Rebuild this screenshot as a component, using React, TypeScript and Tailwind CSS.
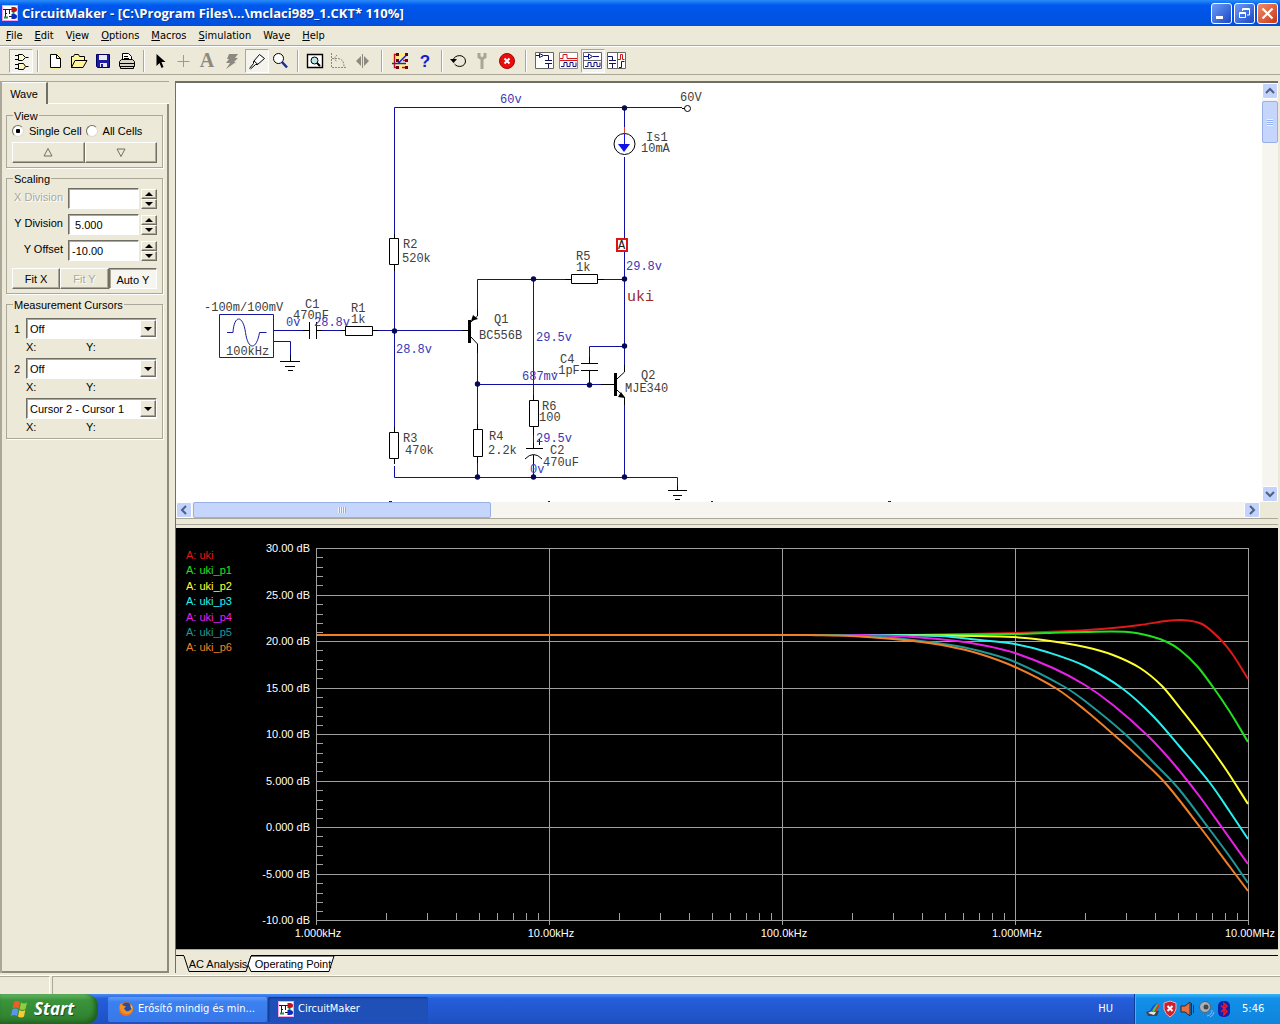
import React, { ReactNode } from "react";

type Pt = [number, number];

const UI = "font-['Liberation_Sans',Arial,sans-serif]";
const TAHOMA = "font-['DejaVu_Sans_Condensed','Open_Sans',sans-serif]";

/* ---------- shared pieces ---------- */

function AppLogo() {
  return (
    <svg viewBox="0 0 16 16" className="size-4 shrink-0" aria-hidden="true">
      <rect width="16" height="16" fill="#ff9ce8" />
      <rect x="1" y="1" width="14" height="14" fill="#fff" />
      <path d="M1 4.500h9M3.500 4v9M7.500 5v4M3 8.500h2M7 11.500h3" stroke="#1c1c1c" fill="none" />
      <path d="M2 12.500h4M11.500 7v2" stroke="#149c3c" strokeWidth="2" />
      <path d="M9.500 2h2.500q3 0 3 2.500T12 7H9.500z" fill="#c80f1e" />
      <path d="M9.500 9h2.500q3 0 3 2.500T12 14H9.500z" fill="#0b2bbd" />
    </svg>
  );
}

function Sep() {
  return <span className="mx-1 h-[22px] w-0.5 border-l border-[#aca899] border-r border-r-white" />;
}

function WideSep() {
  return <span className="mx-1.5 h-[22px] w-0.5 border-l border-[#aca899] border-r border-r-white" />;
}

function Tool({ label, pressed, children }: { label: string; pressed?: boolean; children: ReactNode }) {
  return (
    <button
      type="button"
      aria-label={label}
      aria-pressed={pressed}
      className={
        pressed
          ? "size-6 border border-t-[#aca899] border-l-[#aca899] border-r-white border-b-white bg-[#f5f4ec]"
          : "size-6 border border-transparent"
      }
    >
      <svg viewBox="0 0 22 22" className="size-[22px]" fill="none" stroke="#000" strokeWidth="1">
        {children}
      </svg>
    </button>
  );
}

/* ---------- window chrome ---------- */

function TitleBar() {
  const box = "flex size-[21px] items-center justify-center rounded-[3px] border border-white";
  return (
    <header className="flex h-[26px] shrink-0 items-center bg-linear-to-b from-[#2a8cf8] via-[#0058ee] via-20% to-[#0050dc] pr-0.5 pl-0.5">
      <AppLogo />
      <h1 className="ml-1 flex-1 truncate font-['Open_Sans','Noto_Sans',sans-serif] text-[13px] leading-4 font-bold text-white [text-shadow:1px_1px_0_#0a2f8c]">
        CircuitMaker - [C:\Program Files\...\mclaci989_1.CKT* 110%]
      </h1>
      <div className="flex gap-0.5">
        <button type="button" aria-label="Minimize" className={`${box} bg-linear-to-br from-[#6f9bf5] to-[#1c45c8]`}>
          <svg viewBox="0 0 19 19" className="size-[19px]"><path d="M4 12h7v3H4z" fill="#fff" /></svg>
        </button>
        <button type="button" aria-label="Restore" className={`${box} bg-linear-to-br from-[#6f9bf5] to-[#1c45c8]`}>
          <svg viewBox="0 0 19 19" className="size-[19px]" fill="none" stroke="#fff">
            <path d="M7.500 7V4.500h7V11H12M7 5.500h8" /><path d="M4.500 8.500h6v5h-6zM4 9.500h7" />
          </svg>
        </button>
        <button type="button" aria-label="Close" className={`${box} bg-linear-to-br from-[#f08a68] to-[#c83410]`}>
          <svg viewBox="0 0 19 19" className="size-[19px]"><path d="M4.500 4.500l10 10M14.500 4.500l-10 10" stroke="#fff" strokeWidth="2.200" /></svg>
        </button>
      </div>
    </header>
  );
}

const menus: [string, string, string][] = [
  ["", "F", "ile"], ["", "E", "dit"], ["V", "i", "ew"], ["", "O", "ptions"],
  ["", "M", "acros"], ["", "S", "imulation"], ["Wa", "v", "e"], ["", "H", "elp"],
];

function MenuBar() {
  return (
    <nav className={`flex h-5 shrink-0 items-center border-b border-[#aca899] ${TAHOMA} text-[11px] leading-4 text-black`}>
      {menus.map(([a, u, b]) => (
        <button type="button" key={a + u + b} className="px-1.5">
          {a}<u>{u}</u>{b}
        </button>
      ))}
    </nav>
  );
}

function Toolbar() {
  return (
    <div role="toolbar" aria-label="Main" className="flex h-[29px] shrink-0 items-center border-t border-b border-t-white border-b-[#aca899] pl-[9px]">
      <Tool label="Digital mode" pressed>
        <path fill="#fffbc0" d="M8.500 4.500h4l3 3-3 3h-4zM8.500 13.500h5l2 3-2 3h-5z" />
        <path d="M5 5.500h3M5 9.500h3M16 7.500h2.500M5 14.500h3M5 18.500h3M16 16.500h2.500" />
      </Tool>
      <Sep />
      <Tool label="New">
        <path fill="#ffffb0" stroke="#f5ee70" d="M6 4h10v14H6z" />
        <path fill="#fff" d="M6.500 4.500h6l4 4v9h-10zM12.500 4.500v4h4" />
      </Tool>
      <Tool label="Open">
        <path fill="#fff59a" d="M3.500 17.500v-11h2l1-2h4l1 2h5v4M3.500 17.500l3.500-7h12l-4 7z" />
      </Tool>
      <Tool label="Save">
        <path fill="#1c1c9c" stroke="#000060" d="M4.500 4.500h13v13h-12l-1-1z" />
        <path fill="#e8e8f4" stroke="none" d="M7 5h8v5H7zM8 13h7v4H8z" /><path fill="#1c1c9c" stroke="none" d="M9 14h2v3H9z" />
      </Tool>
      <Tool label="Print">
        <path fill="#fff" d="M6.500 9.500v-6h6l3 3v4M8 6.500h4M8 8.500h5" />
        <path fill="#d8d4c4" d="M5.500 9.500h11l2 2v5h-15v-5zM3.500 13.500h15M4.500 16.500v2h13v-2" />
      </Tool>
      <Sep />
      <Tool label="Select"><path fill="#000" d="M6.500 4v12l3-3 2 5 2-1-2-5h4z" stroke="none" /></Tool>
      <Tool label="Wire"><path stroke="#9c9a8c" d="M9.500 5v12M3.500 11.500h12" /></Tool>
      <Tool label="Text">
        <text x="9" y="17" textAnchor="middle" fill="#8c8a80" stroke="none" fontSize="20" fontFamily="Liberation Serif, serif" fontWeight="bold">A</text>
      </Tool>
      <Tool label="Delete"><path fill="#8c8a80" stroke="none" d="M7 4h9l-3 4h3l-4 4h2L4 19l4-6H4l3-4H5z" /></Tool>
      <Tool label="Probe" pressed>
        <path fill="#fff" d="M3.500 18.500l4-5 0-2 6-7 5 4-7 6-2 0-5 4.500" /><path d="M8 11l4 3.500" />
      </Tool>
      <Tool label="Zoom">
        <circle cx="8.500" cy="8.500" r="5" fill="#fff" /><path d="M12 12l5 5.500" stroke="#1c2ca0" strokeWidth="2.600" />
      </Tool>
      <Sep />
      <Tool label="Fit to window">
        <path fill="#fff" d="M3.500 4.500h15v13h-15z" strokeWidth="1.400" />
        <circle cx="10.500" cy="10.500" r="3.500" fill="#bfe6e6" /><path d="M13 13l3 3" strokeWidth="2" />
      </Tool>
      <Tool label="Rotate">
        <path stroke="#8c8a80" d="M3.500 3v14.500H19M4 8.500h5c5 0 7 3 7 8M9 5l-3 3.500 3 3.500" strokeDasharray="2 1" />
      </Tool>
      <Tool label="Mirror">
        <path fill="#8c8a80" stroke="none" d="M9 6v10l-5-5zM12 6v10l5-5z" /><path stroke="#8c8a80" d="M10.500 4v14" />
      </Tool>
      <WideSep />
      <Tool label="Run analyses">
        <path stroke="#fff080" strokeWidth="5" d="M5 6h11M5 16h13M5 6v10" />
        <path stroke="#c40c1c" strokeWidth="1.400" d="M9 4.500H4.500v13H9M13 10.500h4M12 17.500h5" />
        <path stroke="#1828d0" strokeWidth="1.600" d="M2 13.500h6l9-9M8 13.500h8" />
        <path fill="#700010" stroke="none" d="M6 3h3v3H6zM15 3h3v3h-3zM6 9h3v3H6zM15 9h3v3h-3zM6 16h3v3H6zM15 16h3v3h-3z" />
      </Tool>
      <Tool label="Help">
        <text x="11" y="17" textAnchor="middle" fill="#1818d8" stroke="none" fontSize="17" fontWeight="bold" fontFamily="Liberation Sans, sans-serif">?</text>
      </Tool>
      <Sep />
      <Tool label="Reset">
        <path d="M5 10c2-6 12-6 12.500 1 0 6-8 7-11 3" /><path fill="#000" d="M2 9h7l-3.500 4z" stroke="none" />
      </Tool>
      <Tool label="Step"><path stroke="#a8a698" strokeWidth="3" d="M7 3v4l3 2 3-2V3M10 9v10" /></Tool>
      <Tool label="Stop">
        <circle cx="11" cy="11" r="7.500" fill="#e80c0c" stroke="#a80404" /><path stroke="#fff" strokeWidth="2" d="M8.500 8.500l5 5M13.500 8.500l-5 5" />
      </Tool>
      <WideSep />
      <Tool label="Schematic view">
        <path fill="#fff" stroke="#666" d="M1.500 2.500h18v16h-18z" />
        <path stroke="#101060" d="M2 5.500h3M5.500 3.500v4l4-2zM10 5.500h4.500v5M11 10.500h7M11 13.500h7M14.500 14v4" />
      </Tool>
      <Tool label="Wave view">
        <path fill="#fff" stroke="#888" d="M1.500 2.500h18v16h-18z" /><path stroke="#d01818" d="M2 8.500h3v-4h4v4h10M2 10.500h17" /><path stroke="#101080" d="M3 16.500h3v-4h3v4h3v-4h3v4h3v-4" />
      </Tool>
      <Tool label="Split horizontally" pressed>
        <path fill="#fff" stroke="#666" d="M1.500 2.500h18v16h-18zM2 10.500h17" /><path stroke="#101080" d="M2 6.500h4M6.500 4v5l4-2.500zM11 6.500h6M3 16.500h3v-4h3v4h3v-4h3v4h3v-4" />
      </Tool>
      <Tool label="Split vertically">
        <path fill="#fff" stroke="#666" d="M1.500 2.500h18v16h-18zM11.500 3v15" /><path stroke="#101060" d="M2 6.500h4.500v4M3 10.500h7M3 13.500h7M6.500 14v4M13 17.500h2.500v-6h3" /><path stroke="#d01818" d="M12 9.500h2.500v-5h2v5h2" />
      </Tool>
    </div>
  );
}

/* ---------- side panel ---------- */

const raised =
  "border border-t-white border-l-white border-r-[#716f64] border-b-[#716f64] shadow-[inset_-1px_-1px_0_#aca899]";
const sunken =
  "border border-t-[#716f64] border-l-[#716f64] border-r-white border-b-white shadow-[inset_1px_1px_0_#aca899]";

function Group({ title, children }: { title: string; children: ReactNode }) {
  return (
    <fieldset className="min-w-0 border border-[#aca899] px-[5px] pb-1 shadow-[1px_1px_0_#fff]">
      <legend className="ml-px h-3 px-px leading-[14px]">{title}</legend>
      {children}
    </fieldset>
  );
}

function Radio({ label, on }: { label: string; on?: boolean }) {
  return (
    <label className="flex items-center gap-[5px]">
      <input
        type="radio"
        name="cells"
        defaultChecked={on}
        className="size-3 appearance-none rounded-full border border-t-[#716f64] border-l-[#716f64] border-r-[#e0dccc] border-b-[#e0dccc] bg-white checked:bg-[radial-gradient(circle,#000_2px,#fff_2.500px)]"
      />
      {label}
    </label>
  );
}

function Spin() {
  return (
    <span className="ml-0.5 flex w-4 flex-col">
      {["Increase", "Decrease"].map((n, i) => (
        <button type="button" key={n} aria-label={n} className={`flex h-[10px] items-center justify-center bg-[#ece9d8] ${raised}`}>
          <svg viewBox="0 0 8 4" className="h-1 w-2"><path d={i ? "M0 0h8L4 4z" : "M0 4h8L4 0z"} /></svg>
        </button>
      ))}
    </span>
  );
}

function Field({ id, label, value, off }: { id: string; label: string; value: string; off?: boolean }) {
  return (
    <div className="flex h-[21px] items-center">
      <label htmlFor={id} className={off ? "mb-1 flex-1 pr-[5px] text-right text-[#aca899] [text-shadow:1px_1px_0_#fff]" : "mb-1 flex-1 pr-[5px] text-right"}>
        {label}
      </label>
      <input id={id} defaultValue={value} disabled={off} className={`h-[21px] w-[71px] bg-white pl-[3px] ${sunken}`} />
      <Spin />
    </div>
  );
}

function Cursor({ id, mark, value }: { id: string; mark: string; value: string }) {
  return (
    <div>
      <div className="flex items-center">
        <label htmlFor={id} className="w-[14px] pl-0.5">{mark}</label>
        <div className="relative flex-1">
          <select
            id={id}
            aria-label={mark ? `Cursor ${mark}` : "Difference"}
            className={`block h-[21px] w-full appearance-none bg-white pl-[3px] text-black ${sunken}`}
          >
            <option>{value}</option>
          </select>
          <span className={`pointer-events-none absolute top-0.5 right-px flex h-[17px] w-4 items-center justify-center bg-[#ece9d8] ${raised}`}>
            <svg viewBox="0 0 8 4" className="h-1 w-2"><path d="M0 0h8L4 4z" /></svg>
          </span>
        </div>
      </div>
      <div className="flex h-[15px] items-center pl-[14px]">
        <span className="w-[60px]">X:</span>
        <span>Y:</span>
      </div>
    </div>
  );
}

function SidePanel() {
  return (
    <aside className={`flex w-[169px] shrink-0 flex-col border-l-2 border-t border-[#aca899] ${UI} text-[11px] leading-[14px] text-black`}>
      <div role="tablist" className="flex">
        <button type="button" role="tab" aria-selected="true" className="h-[22px] w-[46px] border-t border-r-2 border-t-white border-r-[#716f64]">
          Wave
        </button>
        <span className="flex-1 border-b border-white" />
      </div>
      <div className="flex flex-1 flex-col gap-1 border-r-2 border-b-2 border-[#8d8b7e] pt-[5px] pr-1 pl-1">
        <Group title="View">
          <div className="flex h-[21px] items-center gap-1 pb-px">
            <Radio label="Single Cell" on />
            <Radio label="All Cells" />
          </div>
          <div className="flex">
            <button type="button" aria-label="Previous cell" className={`flex h-[21px] flex-1 items-center justify-center ${raised}`}>
              <svg viewBox="0 0 10 9" className="h-[9px] w-[10px]" fill="none" stroke="#716f64"><path d="M5 .5l4 7.500H1z" /></svg>
            </button>
            <button type="button" aria-label="Next cell" className={`flex h-[21px] flex-1 items-center justify-center ${raised}`}>
              <svg viewBox="0 0 10 9" className="h-[9px] w-[10px]" fill="none" stroke="#716f64"><path d="M5 8.500L1 1h8z" /></svg>
            </button>
          </div>
        </Group>
        <Group title="Scaling">
          <div className="flex flex-col gap-[5px] pt-1">
            <Field id="xd" label="X Division" value="" off />
            <Field id="yd" label="Y Division" value=" 5.000" />
            <Field id="yo" label="Y Offset" value="-10.00" />
          </div>
          <div className="mt-[7px] flex">
            <button type="button" className={`h-[21px] flex-1 ${raised}`}>Fit X</button>
            <button type="button" disabled className={`h-[21px] flex-1 text-[#aca899] [text-shadow:1px_1px_0_#fff] ${raised}`}>Fit Y</button>
            <button type="button" aria-pressed="true" className={`h-[21px] flex-1 bg-[#f6f5ef] pt-0.5 ${sunken}`}>Auto Y</button>
          </div>
        </Group>
        <Group title="Measurement Cursors">
          <div className="flex flex-col gap-1 pt-2">
            <Cursor id="c1" mark="1" value="Off" />
            <Cursor id="c2" mark="2" value="Off" />
            <Cursor id="c3" mark="" value="Cursor 2 - Cursor 1" />
          </div>
        </Group>
      </div>
    </aside>
  );
}

/* ---------- schematic ---------- */

const wires = [
  "M394.500 237V107.500H624.500V132", "M624.500 107.500H682", "M394.500 266V431", "M394.500 466V477.500H677.500V486",
  "M274 330.500H303", "M274 341.500H290.500V355", "M321 330.500H341", "M378 330.500H466",
  "M477.500 310V279.500H565", "M603 279.500H624.500", "M477.500 353V424", "M477.500 384.500H604",
  "M533.500 279.500V395", "M589.500 357V346.500H624.500", "M624.500 157V365", "M624.500 405V477", "M477.500 463V477", "M533.500 435V443M533.500 465V477",
];

const parts = [
  "M389.500 238.500h9v26h-9zM394.500 234v4M394.500 265v6", "M389.500 432.500h9v26h-9zM394.500 427v5M394.500 459v5",
  "M345.500 326.500h27v9h-27zM341 330.500h4M373 330.500h5", "M571.500 274.500h26v9h-26zM565 279.500h6M598 279.500h6",
  "M473.500 429.500h9v27h-9zM477.500 424v5M477.500 457v6", "M529.500 400.500h9v26h-9zM533.500 395v5M533.500 427v8",
  "M309.500 322v17M316.500 322v17M303 330.500h6M317 330.500h5",
  "M280 361.500h20M285 366.500h10M288 370.500h5M290.500 355v6",
  "M581 363.500h17M581 370.500h17M589.500 357v6M589.500 371v13",
  "M526 448.500h17M525 459q8.500-9 17 0M533.500 443v5M533.500 455v10M539.500 439v6M537 441.500h5",
  "M668 490.500h19M673 495.500h9M675 499.500h5M677.500 486v4",
  "M682 108.500h3M462 330.500h6M471 322l6.500-6v-6M471 337l6.500 7v9M601 384.500h13M617 379l7.500-7v-7M617 390l7.500 7v8",
];

const nodes: Pt[] = [
  [624, 108], [533, 279], [624, 279], [394, 331], [477, 384], [589, 385], [624, 346], [477, 477], [533, 477], [624, 477],
];

const names: [number, number, string][] = [
  [680, 101, "60V"], [646, 141, "Is1"], [641, 152, "10mA"], [403, 248, "R2"], [402, 262, "520k"], [204, 311, "-100m/100mV"],
  [226, 355, "100kHz"], [305, 308, "C1"], [293, 319, "470nF"], [351, 312, "R1"], [351, 323, "1k"], [576, 260, "R5"], [576, 271, "1k"],
  [494, 323, "Q1"], [479, 339, "BC556B"], [560, 363, "C4"], [551, 374, ".1pF"], [641, 379, "Q2"], [625, 392, "MJE340"],
  [542, 410, "R6"], [539, 421, "100"], [489, 440, "R4"], [488, 454, "2.2k"], [550, 454, "C2"], [543, 466, "470uF"],
  [403, 442, "R3"], [405, 454, "470k"],
];

const volts: [number, number, string][] = [
  [500, 103, "60v"], [626, 270, "29.8v"], [286, 326, "0v"], [314, 326, "28.8v"], [396, 353, "28.8v"], [536, 341, "29.5v"],
  [522, 380, "687mv"], [536, 442, "29.5v"], [530, 473, "0v"],
];

function Schematic() {
  return (
    <svg viewBox="176 83 1085 419" className="h-[419px] w-[1085px] max-w-none" fontFamily="Liberation Mono, monospace" fontSize="12" role="img" aria-label="Schematic">
      <g fill="none" strokeWidth="1">
        <path d={wires.join("")} stroke="#1010a0" />
        <path d={parts.join("")} stroke="#000" />
        <path d="M219.500 314.500h54v43h-54zM227 332.500h6c1-18 10-18 12.500 0s11 18 14 0h7" stroke="#1818a0" />
        <circle cx="624.500" cy="144" r="10.500" stroke="#000" />
        <circle cx="687.500" cy="108.500" r="3" stroke="#000" />
        <path d="M624.500 134v12" stroke="#1414e0" />
        <path d="M624.500 127v6" stroke="#d04030" />
      </g>
      <path d="M618 144h12l-6 8z" fill="#1010e8" />
      <path d="M468 320h3v23h-3zM614 373h3v23h-3zM471 321l2-6 5 4zM618 397l7 1-4-6z" fill="#000" />
      {nodes.map(([x, y]) => <circle key={`${x}-${y}`} cx={x + 0.5} cy={y} r="2.700" fill="#080850" />)}
      <g fill="#404040">{names.map(([x, y, t]) => <text key={`${x}-${y}`} x={x} y={y}>{t}</text>)}</g>
      <g fill="#3838b8">{volts.map(([x, y, t]) => <text key={`${x}-${y}`} x={x} y={y}>{t}</text>)}</g>
      <path d="M617 239h10v12h-10z" fill="#fff" stroke="#dc1414" strokeWidth="2" />
      <text x="618" y="249" fill="#222">A</text>
      <text x="627" y="301" fontSize="15" fill="#a02828">uki</text>
      <path d="M389 501.500h3M548 501.500h2M711 501.500h2M888 501.500h3" stroke="#1c1c70" />
    </svg>
  );
}

function ScrollButton({ label, d }: { label: string; d: string }) {
  return (
    <button type="button" aria-label={label} className="flex size-4 shrink-0 items-center justify-center rounded-[2px] border border-white bg-[#c3d3fb]">
      <svg viewBox="0 0 10 10" className="size-[10px]" fill="none" stroke="#4d6185" strokeWidth="2"><path d={d} /></svg>
    </button>
  );
}

function SchematicPane() {
  return (
    <section className="flex min-h-0 flex-col border-b border-[#aca899]">
      <div className="flex min-h-0 flex-1">
        <div className="min-w-0 flex-1 overflow-hidden bg-white"><Schematic /></div>
        <div className="flex w-4 shrink-0 flex-col bg-[#f6f5f0]">
          <ScrollButton label="Scroll up" d="M1 7l4-4 4 4" />
          <div className="mt-0.5 flex h-[42px] items-center justify-center rounded-[2px] border border-[#98b0e8] bg-[#c5d5fc]">
            <span className="h-[7px] w-[6px] bg-[repeating-linear-gradient(to_bottom,#eef4fe_0_1px,#8cb0f8_1px_2px)]" />
          </div>
          <span className="flex-1" />
          <ScrollButton label="Scroll down" d="M1 3l4 4 4-4" />
        </div>
      </div>
      <div className="flex h-4 shrink-0 bg-[#f6f5f0]">
        <ScrollButton label="Scroll left" d="M7 1L3 5l4 4" />
        <div className="ml-px flex w-[27%] items-center justify-center rounded-[2px] border border-[#98b0e8] bg-[#c5d5fc]">
          <span className="h-[6px] w-2 bg-[repeating-linear-gradient(to_right,#eef4fe_0_1px,#8cb0f8_1px_2px)]" />
        </div>
        <span className="flex-1" />
        <ScrollButton label="Scroll right" d="M3 1l4 4-4 4" />
        <span className="w-[18px] bg-[#ece9d8]" />
      </div>
    </section>
  );
}

/* ---------- frequency response ---------- */

const traces: { name: string; color: string; pts: Pt[] }[] = [
  { name: "uki", color: "#e01818", pts: [[913, 635], [1015, 633], [1070, 631], [1113, 628], [1140, 625], [1166, 621], [1182, 620], [1202, 624], [1220, 639], [1233, 655], [1248, 679]] },
  { name: "uki_p1", color: "#20e020", pts: [[913, 635], [1013, 634], [1045, 633], [1085, 632], [1128, 632], [1150, 636], [1167, 642], [1180, 650], [1197, 666], [1213, 687], [1230, 712], [1248, 742]] },
  { name: "uki_p2", color: "#ffff30", pts: [[913, 635], [1013, 637], [1043, 640], [1085, 647], [1113, 655], [1140, 668], [1162, 686], [1180, 708], [1205, 740], [1227, 771], [1248, 804]] },
  { name: "uki_p3", color: "#28f0f0", pts: [[880, 635], [940, 636], [980, 640], [1015, 644], [1047, 652], [1085, 666], [1123, 689], [1153, 716], [1180, 747], [1210, 783], [1230, 812], [1248, 839]] },
  { name: "uki_p4", color: "#e820e8", pts: [[860, 635], [913, 637], [957, 641], [987, 646], [1015, 653], [1053, 668], [1085, 685], [1113, 705], [1147, 735], [1173, 763], [1200, 797], [1223, 829], [1248, 864]] },
  { name: "uki_p5", color: "#209898", pts: [[840, 635], [880, 637], [913, 640], [957, 646], [987, 653], [1015, 662], [1063, 686], [1085, 701], [1125, 734], [1153, 762], [1178, 788], [1210, 830], [1230, 857], [1248, 883]] },
  { name: "uki_p6", color: "#f08028", pts: [[810, 635], [850, 636], [880, 638], [913, 641], [947, 646], [980, 654], [1015, 667], [1057, 689], [1085, 710], [1113, 734], [1145, 763], [1167, 785], [1200, 827], [1230, 867], [1248, 891]] },
];

function smooth(p: Pt[]) {
  let d = `M317 635L${p[0][0]} ${p[0][1]}`;
  for (let i = 0; i < p.length - 1; i++) {
    const a = p[Math.max(i - 1, 0)], b = p[i], c = p[i + 1], e = p[Math.min(i + 2, p.length - 1)];
    const s = (c[0] - b[0]) / 3;
    const m1 = (c[1] - a[1]) / (c[0] - a[0]);
    const m2 = (e[1] - b[1]) / (e[0] - b[0]);
    d += `C${b[0] + s} ${b[1] + m1 * s} ${c[0] - s} ${c[1] - m2 * s} ${c[0]} ${c[1]}`;
  }
  return d;
}

const levels = ["30.00", "25.00", "20.00", "15.00", "10.00", "5.000", "0.000", "-5.000", "-10.00"];
const freqs = ["1.000kHz", "10.00kHz", "100.0kHz", "1.000MHz", "10.00MHz"];
const yAt = (i: number) => Math.round(548 + i * 46.5);
const xAt = (i: number) => Math.round(316 + i * 233);

function Chart() {
  const minorX: number[] = [];
  for (let d = 0; d < 4; d++) for (let k = 2; k < 10; k++) minorX.push(Math.round(xAt(d) + 233 * Math.log10(k)));
  const minorY: number[] = [];
  for (let i = 0; i < 8; i++) for (let k = 1; k < 5; k++) minorY.push(Math.round(yAt(i) + k * 9.3));
  return (
    <svg viewBox="176 528 1102 421" className="h-full w-full" fontFamily="Liberation Sans, Arial, sans-serif" fontSize="11" role="img" aria-label="AC analysis">
      <g stroke="#a0a0a0" shapeRendering="crispEdges">
        {levels.map((_, i) => <path key={i} d={`M316 ${yAt(i) + 0.5}H1249`} />)}
        {freqs.map((_, i) => <path key={i} d={`M${xAt(i) + 0.5} 548V925`} />)}
        {minorX.map((x) => <path key={x} d={`M${x + 0.5} 913V920`} />)}
        {minorY.map((y) => <path key={y} d={`M317 ${y + 0.5}H323`} />)}
      </g>
      <g fill="none" strokeWidth="2">
        {traces.map((t) => <path key={t.name} d={smooth(t.pts)} stroke={t.color} />)}
      </g>
      {traces.map((t, i) => <text key={t.name} x="186" y={Math.round(559 + i * 15.4)} fill={t.color}>A: {t.name}</text>)}
      <g fill="#fff">
        {levels.map((l, i) => <text key={l} x="310" y={yAt(i) + 4} textAnchor="end">{l} dB</text>)}
        {freqs.map((f, i) => <text key={f} x={xAt(i) + 2} y="937" textAnchor="middle">{f}</text>)}
      </g>
    </svg>
  );
}

function SheetTabs() {
  return (
    <div role="tablist" className={`flex border-t border-[#aca899] pt-[5px] ${UI} text-[11px] leading-[14px] text-black`}>
      <div className="flex flex-1 items-start border-t border-black pl-2">
        <button type="button" role="tab" aria-selected="true" className="relative isolate h-4 w-[67px] pl-px whitespace-nowrap">
          <svg viewBox="0 0 67 16" className="absolute inset-0 -z-10 h-4 w-[67px] overflow-visible" fill="#ece9d8" stroke="#000">
            <path d="M0-1h67" stroke="#ece9d8" strokeWidth="2" /><path d="M0 0l5 15.500h57L67 0" />
          </svg>
          AC Analysis
        </button>
        <button type="button" role="tab" aria-selected="false" className="relative isolate h-4 w-[84px] whitespace-nowrap">
          <svg viewBox="0 0 84 16" className="absolute inset-0 -z-10 h-4 w-[84px] overflow-visible" fill="#fff" stroke="#000">
            <path d="M0 0l-3 9 3 6.500h78L83 0z" />
          </svg>
          Operating Point
        </button>
      </div>
    </div>
  );
}

/* ---------- taskbar ---------- */

function Taskbar() {
  return (
    <footer className={`flex h-[30px] shrink-0 items-stretch bg-linear-to-b from-[#4a8cf4] via-[#245edc] via-15% to-[#1f50c0] ${TAHOMA} text-[11px] text-white`}>
      <button type="button" className="flex w-[98px] items-center gap-1 rounded-r-xl bg-linear-to-b from-[#6cb86a] via-[#3b953b] via-20% to-[#2f7d2f] pl-[10px] shadow-[inset_-3px_-2px_5px_#1c5c1c]">
        <svg viewBox="0 0 20 20" className="size-5" aria-hidden="true">
          <path d="M4 3q3-2 6 0L8.500 9.500q-3-2-6 0z" fill="#f05c28" /><path d="M11 3.500q3 2 6 0L15.500 10q-3 2-6 0z" fill="#8cd03c" />
          <path d="M2.300 10.500q3-2 6 0L7 17q-3-2-6 0z" fill="#5c94f0" /><path d="M9.300 11q3 2 6 0L14 17.500q-3 2-6 0z" fill="#f8cc30" />
        </svg>
        <span className="font-['Open_Sans','Noto_Sans',sans-serif] text-[17px] leading-5 font-bold italic [text-shadow:1px_1px_1px_#1c4c1c]">Start</span>
      </button>
      <div className="ml-[10px] flex flex-1 items-center gap-px">
        <button type="button" className="flex h-[25px] w-[159px] items-center gap-1 rounded-[2px] bg-linear-to-b from-[#5c9cf8] via-[#3c80f0] via-20% to-[#3878e8] pl-[10px]">
          <svg viewBox="0 0 16 16" className="size-4 shrink-0" aria-hidden="true">
            <circle cx="8" cy="8" r="7" fill="#e87018" /><circle cx="8.500" cy="6.500" r="5" fill="#2c4c9c" />
            <path d="M1.500 5L3 2l2 2.500 3 1-2 2 2 2.500c3 1 4-1 7-3 0 8-13 9-13.500-2z" fill="#f49020" /><path d="M12 3q3 2 3 5l-2-1z" fill="#fcc030" />
          </svg>
          <span className="whitespace-nowrap">Erősítő mindig és min...</span>
        </button>
        <button type="button" className="flex h-[25px] w-[160px] items-center gap-1 rounded-[2px] bg-[#1e50b8] pl-[10px] shadow-[inset_1px_1px_2px_#103888]">
          <AppLogo />
          CircuitMaker
        </button>
      </div>
      <span className="mr-[21px] self-center">HU</span>
      <div className="flex w-[146px] items-center border-l border-[#0c3c9c] bg-linear-to-b from-[#38b4f8] via-[#1290ea] via-15% to-[#0f84dc] pl-[10px] shadow-[inset_1px_0_0_#38b8fc]">
        <svg viewBox="0 0 88 18" className="h-[18px] w-[88px]" aria-hidden="true">
          <path d="M1 12l6-2 7 1-2 5H3z" fill="#3c4450" /><path d="M3 13l4-2 4 1-2 3z" fill="#e8e8e0" />
          <path d="M5 11q3-7 8-8l-5 9z" fill="#2840e0" /><path d="M7 11q3-6 6.500-8L10 12z" fill="#40d040" /><path d="M9 12l5-9v4l-3 5z" fill="#e83020" />
          <path d="M19 3l6-2 6 2v6q-1 5-6 8-5-3-6-8z" fill="#d02030" stroke="#f0b0a8" /><path d="M22.500 6l5 5M27.500 6l-5 5" stroke="#fff" strokeWidth="2" />
          <path d="M36 6h4l5-4v14l-5-4h-4z" fill="#e87040" stroke="#402018" /><path d="M46.500 3v12M48.500 5v8" stroke="#303030" />
          <circle cx="60" cy="7" r="5.500" fill="#a8b0b8" stroke="#58646c" /><circle cx="61" cy="7" r="2.500" fill="#404850" /><path d="M62 16q5-1 5-6M65 17q4-2 4-5" stroke="#90b8f0" fill="none" />
          <rect x="73" y="1" width="12" height="16" rx="5" fill="#1420a8" /><path d="M76 5.500l6 6-3 3v-11l3 2.500-6 6" stroke="#e81830" strokeWidth="1.600" fill="none" />
        </svg>
        <time className="ml-[9px]">5:46</time>
      </div>
    </footer>
  );
}

export default function App() {
  return (
    <div className="flex h-screen min-h-[700px] flex-col overflow-hidden bg-[#ece9d8]">
      <TitleBar />
      <MenuBar />
      <Toolbar />
      <main className="flex min-h-0 flex-1 gap-[6px] pt-[6px] pr-0.5 pb-0.5">
        <SidePanel />
        <div className="grid min-w-0 flex-1 grid-rows-[436fr_9px_421fr_24px] border-t-2 border-l border-[#716f64]">
          <SchematicPane />
          <div className="mt-[5px] border-t border-[#aca899]" />
          <section className="min-h-0 overflow-hidden bg-black"><Chart /></section>
          <SheetTabs />
        </div>
      </main>
      <div role="status" className="flex h-[19px] shrink-0 gap-0.5 border-t border-white">
        <span className="w-[50px] border-t border-r border-[#aca899] border-r-white" />
        <span className="flex-1 border-t border-l border-[#aca899]" />
      </div>
      <Taskbar />
    </div>
  );
}
